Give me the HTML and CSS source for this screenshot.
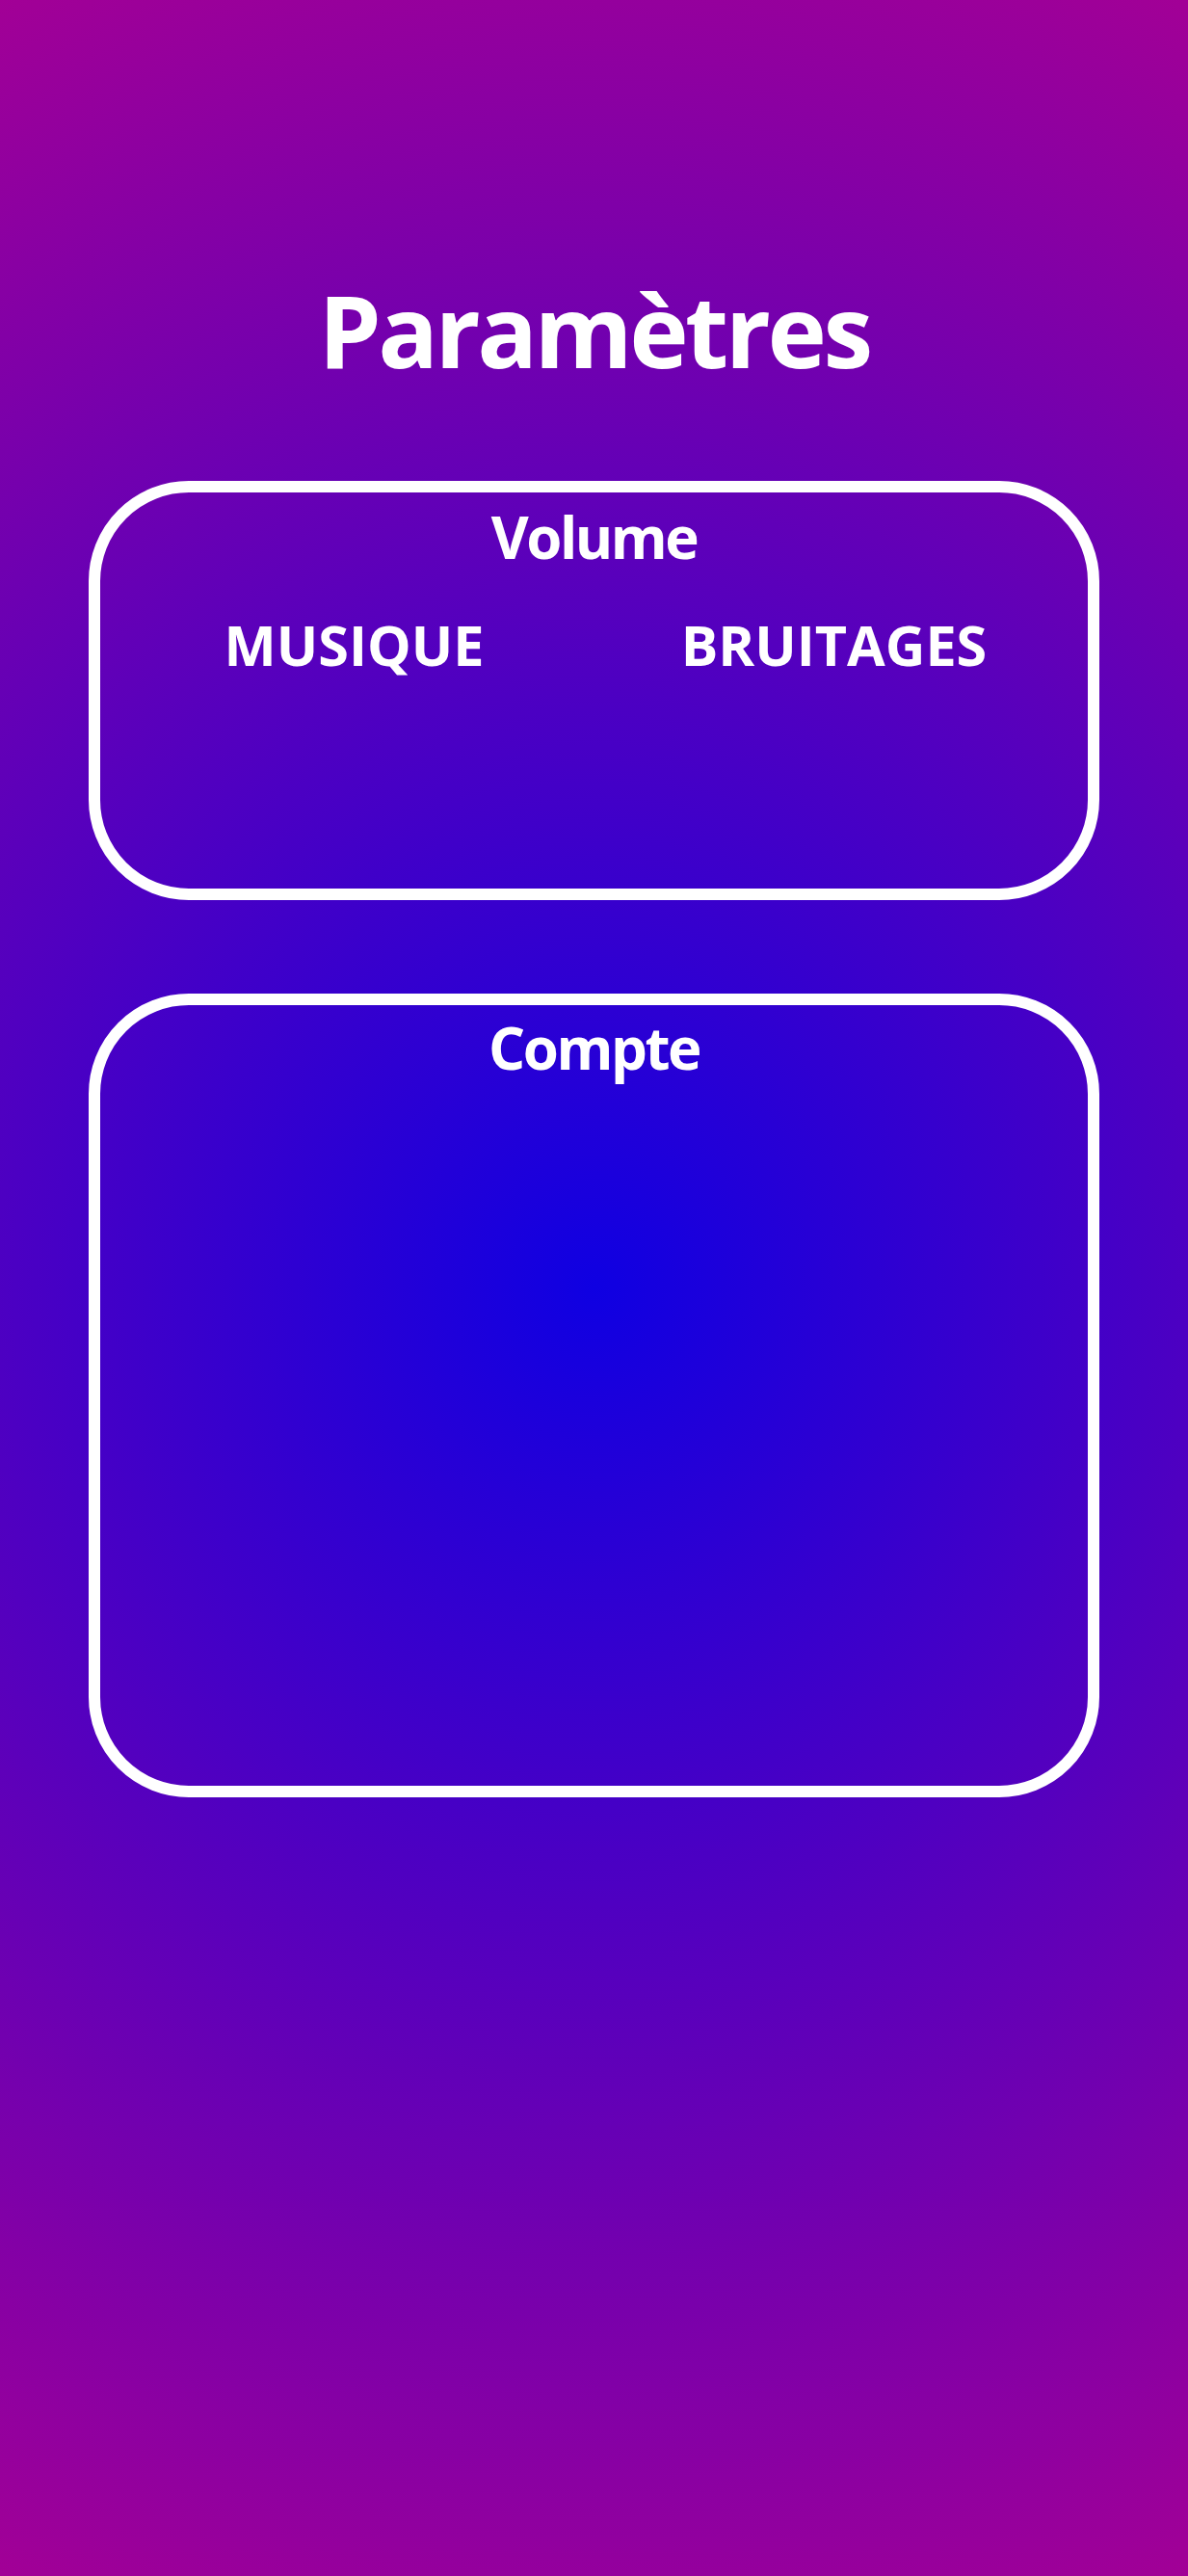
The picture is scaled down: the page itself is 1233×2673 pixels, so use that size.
FILE: index.html
```html
<!DOCTYPE html>
<html lang="fr">
<head>
<meta charset="utf-8">
<title>Paramètres</title>
<link rel="stylesheet" href="styles.css">
</head>
<body>
<main class="page">
  <h1 class="title">Paramètres</h1>
  <section class="panel panel-volume">
    <h2 class="panel-title">Volume</h2>
    <div class="volume-row">
      <div class="volume-col">MUSIQUE</div>
      <div class="volume-col">BRUITAGES</div>
    </div>
  </section>
  <section class="panel panel-account">
    <h2 class="panel-title">Compte</h2>
  </section>
</main>
</body>
</html>
```
FILE: styles.css
```css
html, body {
  margin: 0;
  padding: 0;
}
body {
  min-height: 100vh;
  background: radial-gradient(circle farthest-corner at 50% 50%, #0f00e2 0%, #a20096 100%);
  font-family: "Open Sans", "Noto Sans", sans-serif;
  color: #ffffff;
}
.page {
  display: flex;
  flex-direction: column;
  align-items: center;
  padding-top: 290px;
}
.title {
  margin: 0;
  font-size: 104px;
  line-height: 1;
  font-weight: 700;
  letter-spacing: -3.5px;
}
.panel {
  box-sizing: border-box;
  width: 85%;
  border: 12px solid #ffffff;
  border-radius: 104px;
  padding: 16px 14px 0;
}
.panel-volume {
  margin-top: 105px;
  height: 435px;
}
.panel-account {
  margin-top: 97px;
  height: 834px;
}
.panel-account .panel-title {
  margin-top: -2px;
}
.panel-title {
  margin: 0;
  text-align: center;
  font-size: 60px;
  line-height: 1;
  font-weight: 700;
  letter-spacing: -2.5px;
}
.volume-row {
  display: grid;
  grid-template-columns: 1fr 1fr;
  margin-top: 54px;
}
.volume-col {
  text-align: center;
  font-size: 57.5px;
  line-height: 1;
  font-weight: 700;
  letter-spacing: 0;
}
```
